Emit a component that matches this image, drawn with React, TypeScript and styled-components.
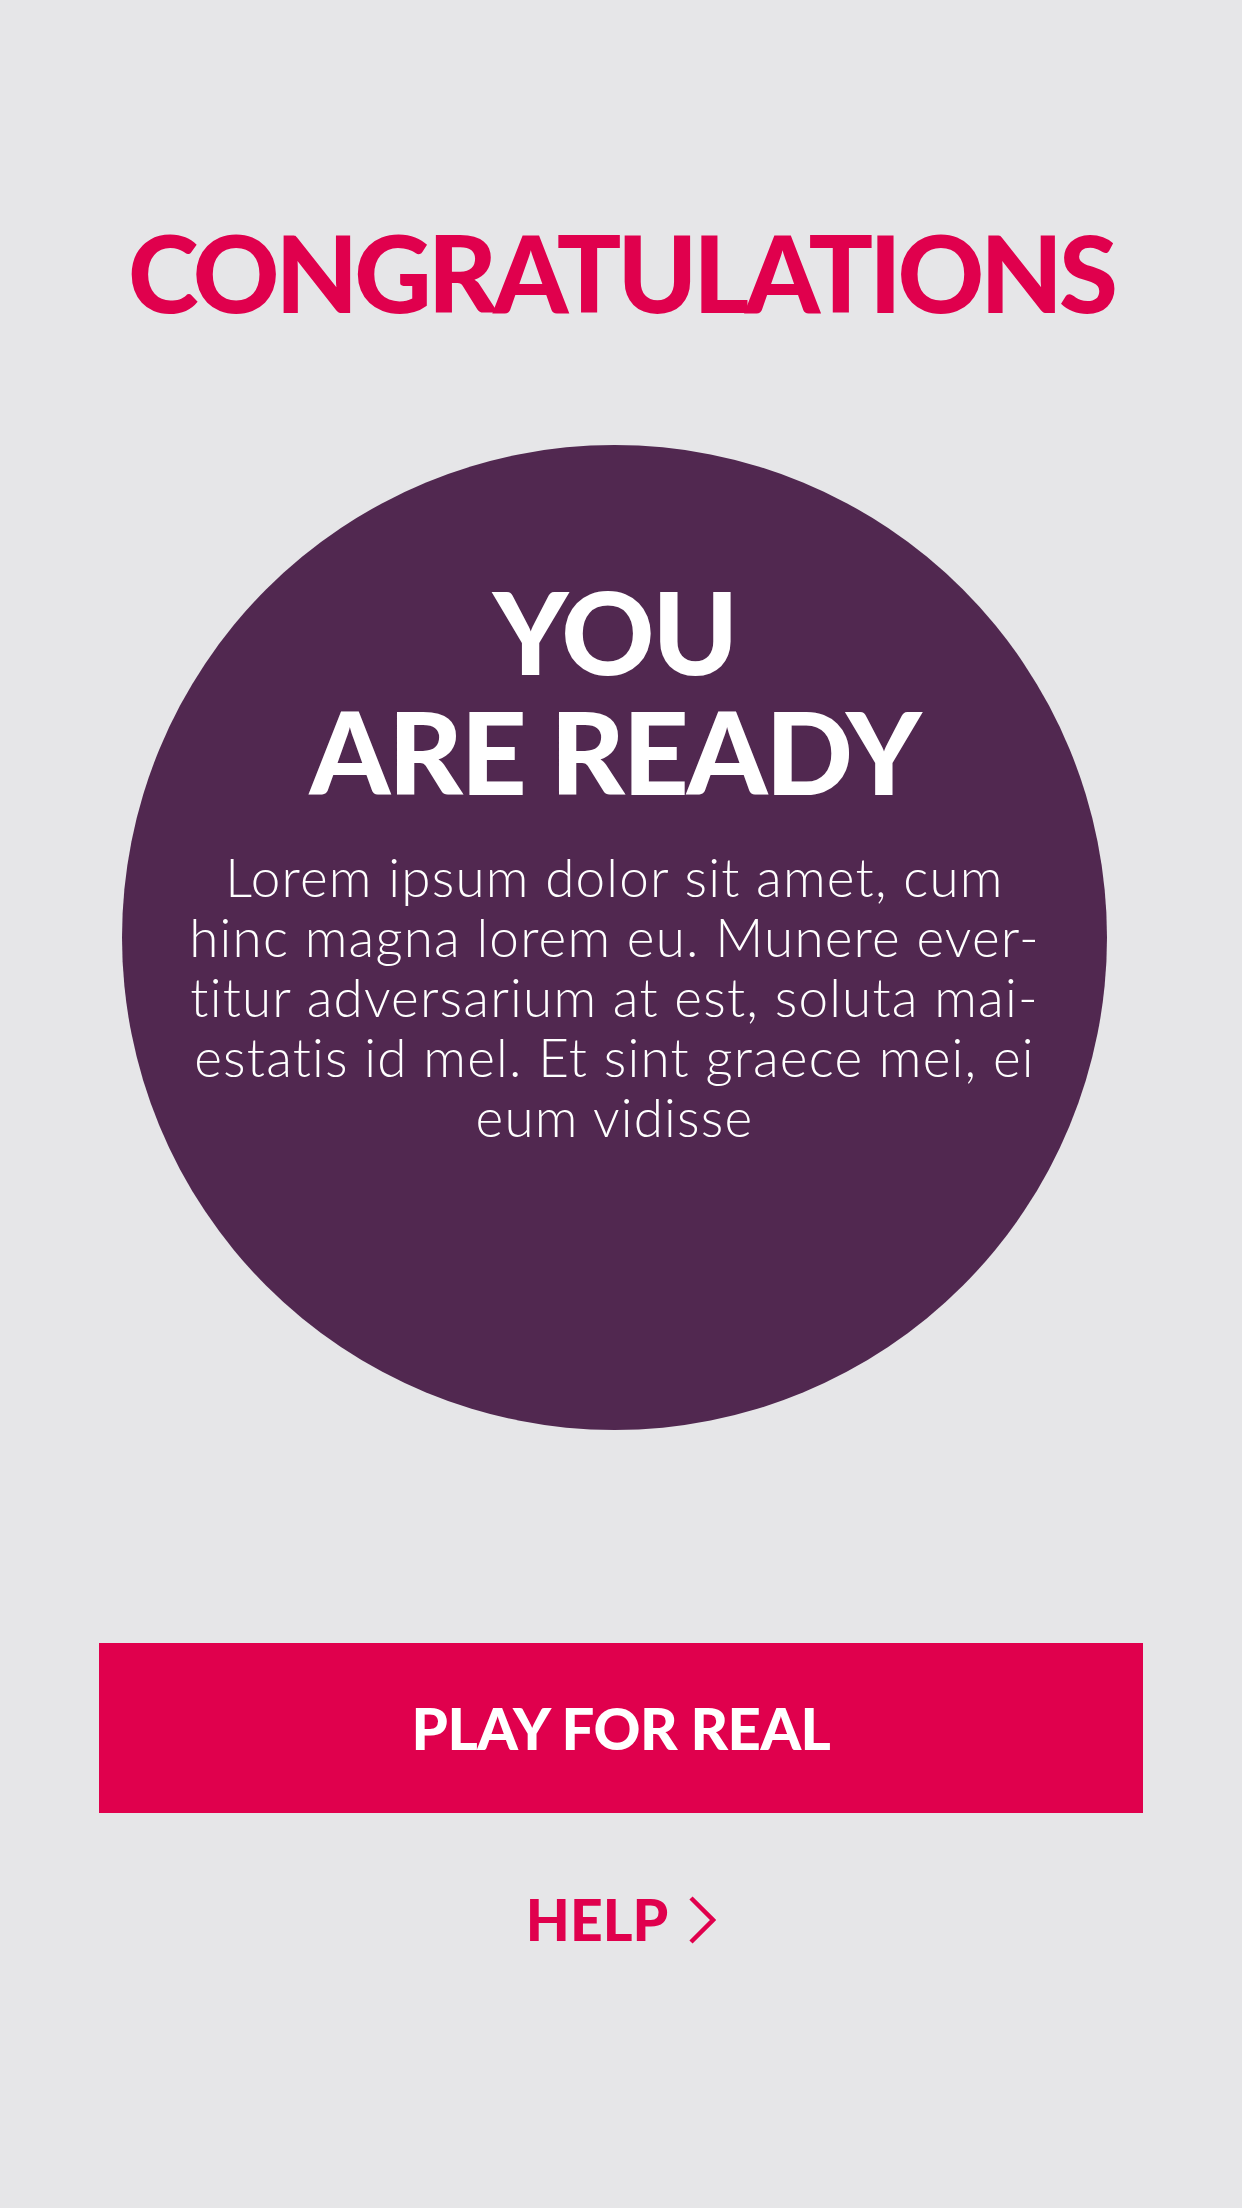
import React from "react";
import styled, { createGlobalStyle } from "styled-components";

const GlobalStyle = createGlobalStyle`
  html, body {
    margin: 0;
    padding: 0;
    background: #e6e6e8;
  }
  body {
    font-family: "Lato", "Open Sans", "Liberation Sans", sans-serif;
  }
`;

const PINK = "#e0004d";
const PURPLE = "#512850";

const Page = styled.main`
  min-height: 2208px;
  display: flex;
  flex-direction: column;
  align-items: center;
  padding-top: 218px;
  box-sizing: border-box;
`;

const Title = styled.h1`
  margin: 0;
  font-family: "Lato", sans-serif;
  font-weight: 900;
  font-size: 107px;
  line-height: 107px;
  color: ${PINK};
  letter-spacing: -4px;
  text-transform: uppercase;
`;

const Circle = styled.section`
  margin: 120px 13px 0 0;
  width: 985px;
  height: 985px;
  border-radius: 50%;
  background: ${PURPLE};
  display: flex;
  flex-direction: column;
  align-items: center;
  padding-top: 125px;
  box-sizing: border-box;
  color: #ffffff;
`;

const Heading = styled.h2`
  margin: 0;
  font-family: "Lato", sans-serif;
  font-weight: 900;
  font-size: 115px;
  line-height: 120px;
  letter-spacing: -2px;
  text-align: center;
  text-transform: uppercase;
`;

const Body = styled.p`
  margin: 37px 0 0;
  font-family: "Lato", sans-serif;
  font-weight: 300;
  font-size: 53px;
  line-height: 60px;
  letter-spacing: 1.2px;
  font-variant-ligatures: none;
  text-align: center;
`;

const Line = styled.span`
  display: block;
  white-space: nowrap;
`;

const PrimaryButton = styled.button`
  margin-top: 213px;
  width: 1044px;
  height: 170px;
  border: none;
  border-radius: 0;
  background: ${PINK};
  color: #ffffff;
  display: flex;
  align-items: center;
  justify-content: center;
  font-family: "Lato", sans-serif;
  font-weight: 900;
  font-size: 58px;
  line-height: 1;
  letter-spacing: -0.5px;
  padding: 0;
  cursor: pointer;
`;

const HelpLink = styled.a`
  margin-top: 78px;
  display: flex;
  align-items: center;
  gap: 20px;
  color: ${PINK};
  font-family: "Lato", sans-serif;
  font-weight: 900;
  font-size: 57px;
  line-height: 57px;
  text-decoration: none;
  cursor: pointer;
`;

const Chevron = () => (
  <svg width="28" height="48" viewBox="0 0 28 48" fill="none">
    <path
      d="M3 2 L25 24 L3 46"
      stroke={PINK}
      strokeWidth="4.5"
      strokeLinecap="butt"
      strokeLinejoin="miter"
    />
  </svg>
);

const bodyLines = [
  "Lorem ipsum dolor sit amet, cum",
  "hinc magna lorem eu. Munere ever-",
  "titur adversarium at est, soluta mai-",
  "estatis id mel. Et sint graece mei, ei",
  "eum vidisse",
];

export default function App() {
  return (
    <>
      <GlobalStyle />
      <Page>
        <Title>Congratulations</Title>
        <Circle>
          <Heading>
            You
            <br />
            Are Ready
          </Heading>
          <Body>
            {bodyLines.map((l) => (
              <Line key={l}>{l}</Line>
            ))}
          </Body>
        </Circle>
        <PrimaryButton>PLAY FOR REAL</PrimaryButton>
        <HelpLink>
          HELP
          <Chevron />
        </HelpLink>
      </Page>
    </>
  );
}
